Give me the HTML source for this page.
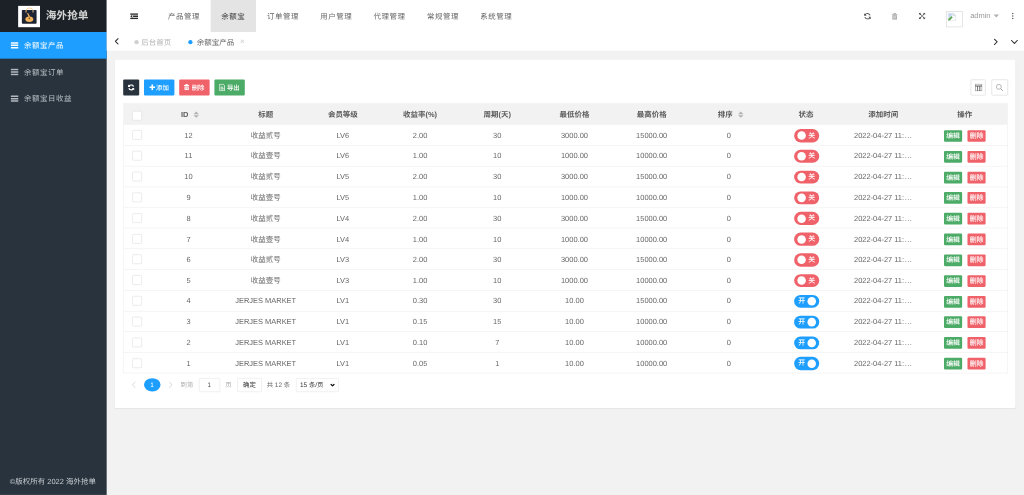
<!DOCTYPE html>
<html lang="zh-CN">
<head>
<meta charset="utf-8">
<title>海外抢单</title>
<style>
*{box-sizing:border-box;margin:0;padding:0}
html,body{width:1024px;height:495px;overflow:hidden;background:#f2f2f2}
body{text-rendering:geometricPrecision;font-family:"Liberation Sans","Noto Sans CJK SC",sans-serif;font-size:14px;color:#666;line-height:24px}
#app{position:absolute;left:0;top:0;width:1920px;height:928px;filter:contrast(1);transform:scale(0.533333);transform-origin:0 0;background:#f2f2f2;overflow:hidden}
ul{list-style:none}
.abs{position:absolute}
/* sidebar */
.side{position:absolute;left:0;top:0;width:200px;height:928px;background:#28333e}
.logo{height:59.500px;background:#1c2127;position:relative}
.logo .img{position:absolute;left:33.500px;top:10.500px;width:41px;height:40px;background:#fff}
.logo .txt{position:absolute;left:86px;top:0;line-height:60px;font-size:20px;font-weight:bold;color:#d2d2d2;white-space:nowrap}
.menu li{height:50px;line-height:50px;color:#bbc0c5;font-size:14px;position:relative;padding-left:45px;letter-spacing:1px;white-space:nowrap}
.menu li.on{background:#1e9fff;color:#fff;height:50.500px}
.menu li svg{position:absolute;left:20px;top:18px}
.copy{position:absolute;left:0;bottom:0;width:200px;height:50px;line-height:50px;padding-left:18.500px;font-size:14px;color:#c9cdd1;white-space:nowrap}
/* header */
.head{position:absolute;left:200px;top:0;right:0;height:60px;background:#fff}
.nav .it{position:absolute;top:0;height:59.500px;line-height:60px;font-size:14px;color:#666;padding-left:20px;letter-spacing:1px;white-space:nowrap}
.nav .it.on{background:#e4e4e4;color:#333}
/* tabs */
.tabs{position:absolute;left:200px;top:60px;right:0;height:35px;background:#fff}
.tabs .t{position:absolute;top:1.300px;line-height:36px;font-size:14px;color:#b4b4b4;white-space:nowrap}
.tabs .t.on{color:#666}
.dot{position:absolute;width:8px;height:8px;border-radius:50%;background:#d0d0d0}
/* card */
.card{position:absolute;left:215px;top:112px;width:1689px;height:653px;background:#fff;border-radius:3px;box-shadow:0 1px 2px rgba(0,0,0,.05)}
.btn{position:absolute;top:37px;height:30px;line-height:30px;border-radius:2px;color:#fff;font-size:12px;font-weight:500;text-align:center;white-space:nowrap}
.tbtn{position:absolute;top:36.500px;width:30px;height:30.500px;border:1px solid #d4d4d4;border-radius:2px;background:#fff}
.tb{position:absolute;left:16px;top:81px;width:1659px;border:1px solid #ececec;border-bottom:0}
.tr{display:flex;height:38.850px;border-bottom:1px solid #ececec;font-size:14px;color:#666;white-space:nowrap}
.tr.h{height:40px;background:#f2f2f2;font-weight:bold;color:#5a5a5a;border-bottom:0}
.tr>div{flex:0 0 144.760px;display:flex;align-items:center;justify-content:center;overflow:hidden;position:relative;top:0.600px}
.tr.h>div{top:0.500px}
.tr>div.c0{flex:0 0 49px}
.tr>div.op{flex:1 1 auto}
.tr>div.dt{justify-content:flex-start;padding-left:17.500px}
.el{letter-spacing:1px;margin-left:1px}
.cb{display:block;width:18px;height:18px;border:1px solid #dcdcdc;border-radius:2px;background:#fff;position:relative;top:-0.200px}
.tr.h .cb{top:2px}
.sort{display:block;position:relative;width:10px;height:14px;margin-left:10px;margin-right:-6px}
.sort:before,.sort:after{content:"";position:absolute;left:0;border:5px solid transparent}
.sort:before{top:-4px;border-bottom-color:#b2b2b2}
.sort:after{top:8px;border-top-color:#b2b2b2}
.sw{display:block;position:relative;top:0.800px;left:1px;width:47.500px;height:24.500px;border-radius:12.500px;color:#fff;font-size:12px;line-height:24px}
.sw.off{background:#f0626a}
.sw.onn{background:#1e9fff}
.sw i{position:absolute;top:4.250px;width:16px;height:16px;border-radius:50%;background:#fff}
.sw.off i{left:6px}.sw.onn i{right:6px}
.sw b{position:absolute;top:0;font-weight:500;font-size:13px}
.sw.off b{left:27px}
.sw.onn b{left:8px}
.ab{display:block;position:relative;top:1.300px;width:34px;height:22px;line-height:22px;font-size:13px;letter-spacing:-0.500px;font-weight:500;color:#fff;border-radius:2px;text-align:center}
.ab.g{background:#4cab66}
.ab.r{background:#f0626a;margin-left:10px}
.pg{position:absolute;white-space:nowrap;font-size:12px;line-height:26px;top:596.500px;height:26px}
.pg.bx{border:1px solid #e2e2e2;border-radius:2px;line-height:24px;text-align:center;background:#fff}
</style>
</head>
<body>
<div id="app">

<div class="side">
  <div class="logo">
    <div class="img">
      <svg width="41" height="40" viewBox="0 0 41 40">
        <rect x="7" y="7.600" width="27.600" height="26" rx="1.500" fill="#1e2433"/>
        <path d="M14.800 12.500 V9.500 C14.800 2.500 28 2.500 28 9.500 V12.500" fill="none" stroke="#f3c98f" stroke-width="1.800"/>
        <path d="M16.500 13.500 L19 14 L22.500 20 L20 21.500 Z" fill="#e9b15e"/>
        <ellipse cx="21" cy="25" rx="7.400" ry="5.200" fill="#f2b45a"/>
        <circle cx="21" cy="23.500" r="1.500" fill="#7a4a1c"/>
      </svg>
    </div>
    <div class="txt">海外抢单</div>
  </div>
  <ul class="menu">
    <li class="on"><svg width="14.500" height="14" viewBox="0 0 16 14" preserveAspectRatio="none"><path d="M0 1h16v2.800H0zM0 5.600h16v2.800H0zM0 10.200h16v2.800H0z" fill="#fff"/></svg>余额宝产品</li>
    <li><svg width="14.500" height="14" viewBox="0 0 16 14" preserveAspectRatio="none"><path d="M0 1h16v2.800H0zM0 5.600h16v2.800H0zM0 10.200h16v2.800H0z" fill="#b4b9bf"/></svg>余额宝订单</li>
    <li><svg width="14.500" height="14" viewBox="0 0 16 14" preserveAspectRatio="none"><path d="M0 1h16v2.800H0zM0 5.600h16v2.800H0zM0 10.200h16v2.800H0z" fill="#b4b9bf"/></svg>余额宝日收益</li>
  </ul>
  <div class="copy">©版权所有 2022 海外抢单</div>
</div>

<div class="head">
  <div class="nav">
    <svg class="abs" style="left:43.500px;top:25px" width="15" height="11" viewBox="0 0 15 11"><path d="M0 0h15v2.500H0zM5.500 4.250H15v2.500H5.500zM0 8.500h15v2.500H0zM4 2.800v5.400L0.200 5.500z" fill="#2a2a2a"/></svg>
    <div class="it" style="left:95px;width:100px">产品管理</div>
    <div class="it on" style="left:195px;width:84.500px">余额宝</div>
    <div class="it" style="left:280.500px;width:100px">订单管理</div>
    <div class="it" style="left:380.500px;width:100px">用户管理</div>
    <div class="it" style="left:480.500px;width:100px">代理管理</div>
    <div class="it" style="left:580.500px;width:100px">常规管理</div>
    <div class="it" style="left:680.500px;width:100px">系统管理</div>
  </div>
  <svg class="abs" style="left:1419.500px;top:23.500px" width="13" height="13" viewBox="0 0 14 14"><path d="M12.200 5.200A5.500 5.500 0 0 0 2 4.600M1.800 8.800A5.500 5.500 0 0 0 12 9.400" fill="none" stroke="#5a5a5a" stroke-width="2.300"/><path d="M0.200 0.800v5.200h5.200zM13.800 13.200v-5.200H8.600z" fill="#5a5a5a"/></svg>
  <svg class="abs" style="left:1472px;top:23.500px" width="11" height="13" viewBox="0 0 11 13"><path d="M0 2.200h11v1.600H0zM3.500 0.500h4v1.700h-4zM1.200 4.400h8.600V13H1.200z" fill="#a8a8a8"/><path d="M3.600 6v5M5.500 6v5M7.400 6v5" stroke="#fff" stroke-width="0.800"/></svg>
  <svg class="abs" style="left:1523px;top:24px" width="12" height="12" viewBox="0 0 14 14"><path d="M0 0h5L3.400 1.600 5.600 3.800 3.800 5.600 1.600 3.400 0 5zM14 0v5l-1.600-1.600-2.200 2.200-1.800-1.800 2.200-2.200L9 0zM0 14V9l1.600 1.600 2.200-2.200 1.800 1.800-2.200 2.200L5 14zM14 14H9l1.600-1.600-2.200-2.200 1.800-1.800 2.200 2.200L14 9z" fill="#555"/><path d="M4.500 4.500l5 5M9.500 4.500l-5 5" stroke="#555" stroke-width="1.500"/></svg>
  <div class="abs" style="left:1574px;top:20.500px;width:31px;height:30px;border:1px solid #cfcfcf;background:#fff">
    <svg width="16" height="16" viewBox="0 0 16 16" style="position:absolute;left:2px;top:2px"><path d="M0.500 0.500h10l5 5v10h-15z" fill="#fff" stroke="#c0c4ca" stroke-width="1"/><path d="M1 14.500V11l5.500-5 3 2.500L4 14.500z" fill="#62a85a"/><path d="M1.500 1.500h7.500v3.500L6.500 5.500 1.500 10z" fill="#c4d8f5"/><path d="M10.500 0.500v5h5" fill="#eef1f5" stroke="#c0c4ca" stroke-width="1"/></svg>
  </div>
  <div class="abs" style="left:1619px;top:0;line-height:58px;font-size:14px;color:#999;white-space:nowrap">admin</div>
  <div class="abs" style="left:1663px;top:27px;border:5px solid transparent;border-top:6px solid #b0b0b0;border-bottom:0"></div>
  <svg class="abs" style="left:1696.500px;top:24px" width="4" height="12" viewBox="0 0 4 12"><circle cx="2" cy="1.500" r="1.400" fill="#555"/><circle cx="2" cy="6" r="1.400" fill="#555"/><circle cx="2" cy="10.500" r="1.400" fill="#555"/></svg>
</div>

<div class="tabs">
  <svg class="abs" style="left:15px;top:11px" width="8" height="13" viewBox="0 0 8 13"><path d="M7 0.800L1.300 6.500 7 12.200" fill="none" stroke="#333" stroke-width="2"/></svg>
  <span class="dot" style="left:51.500px;top:14.500px"></span>
  <div class="t" style="left:65px">后台首页</div>
  <span class="dot" style="left:152.500px;top:14.500px;background:#1e9fff"></span>
  <div class="t on" style="left:169px">余额宝产品</div>
  <div class="t" style="left:250px;font-size:15px;color:#cacaca">×</div>
  <svg class="abs" style="left:1663px;top:11.500px" width="8" height="13" viewBox="0 0 8 13"><path d="M1 0.800L6.700 6.500 1 12.200" fill="none" stroke="#333" stroke-width="1.900"/></svg>
  <svg class="abs" style="left:1695px;top:14px" width="14" height="9" viewBox="0 0 14 9"><path d="M0.800 1L7 7.500 13.200 1" fill="none" stroke="#333" stroke-width="1.900"/></svg>
</div>

<div class="card">
  <div class="btn" style="left:16px;width:30px;background:#28333e"><svg width="12" height="12" viewBox="0 0 14 14" style="margin-top:9px"><path d="M12 5.200A5.300 5.300 0 0 0 2.200 4.400M2 8.800A5.300 5.300 0 0 0 11.800 9.600" fill="none" stroke="#fff" stroke-width="2.800"/><path d="M0 0.300v5.600h5.600zM14 13.700v-5.600H8.400z" fill="#fff"/></svg></div>
  <div class="btn" style="left:55px;width:56.500px;background:#1e9fff"><svg width="11" height="11" viewBox="0 0 11 11" style="vertical-align:-1px;margin-right:2px"><path d="M4 0h3v4h4v3H7v4H4V7H0V4h4z" fill="#fff"/></svg>添加</div>
  <div class="btn" style="left:121px;width:57px;background:#f0626a"><svg width="10" height="12" viewBox="0 0 10 12" style="vertical-align:-1px;margin-right:4px"><path d="M0 2.500h10v1.600H0zM3 0.500h4v2h-4zM1 5h8v7H1z" fill="#fff"/><path d="M3.500 6.500v4M6.500 6.500v4" stroke="#f0626a" stroke-width="1"/></svg>删除</div>
  <div class="btn" style="left:187px;width:57px;background:#4cab66"><svg width="11" height="14" viewBox="0 0 11 14" style="vertical-align:-3px;margin-right:3px"><path d="M0.800 0.800h6.400l3 3v9.400H0.800z" fill="none" stroke="#fff" stroke-width="1.500"/><path d="M7.500 6.200H3.500v4h4v-2H5.500" fill="none" stroke="#fff" stroke-width="1.300"/></svg>导出</div>

  <div class="tbtn" style="left:1604.500px;width:28.500px"><svg width="14" height="14" viewBox="0 0 14 14" style="position:absolute;left:7px;top:7px"><path d="M0.700 0.700h12.600v3.600H0.700zM0.700 4.300h4.200v9H0.700zM4.900 4.300h4.200v9H4.900zM9.100 4.300h4.200v9H9.100z" fill="none" stroke="#555" stroke-width="1"/></svg></div>
  <div class="tbtn" style="left:1643.700px;width:31px"><svg width="14" height="14" viewBox="0 0 14 14" style="position:absolute;left:7px;top:7px"><circle cx="5.800" cy="5.800" r="4.600" fill="none" stroke="#999" stroke-width="1.300"/><path d="M9.200 9.200l4 4" stroke="#999" stroke-width="1.800"/></svg></div>

  <div class="tb">
    <div class="tr h"><div class="c0"><span class="cb"></span></div><div>ID<span class="sort"></span></div><div>标题</div><div>会员等级</div><div>收益率(%)</div><div>周期(天)</div><div>最低价格</div><div>最高价格</div><div>排序<span class="sort"></span></div><div>状态</div><div>添加时间</div><div class="op">操作</div></div>
    <div class="tr"><div class="c0"><span class="cb"></span></div><div>12</div><div>收益贰号</div><div>LV6</div><div>2.00</div><div>30</div><div>3000.00</div><div>15000.00</div><div>0</div><div><span class="sw off"><i></i><b>关</b></span></div><div class="dt">2022-04-27 11:<span class="el">...</span></div><div class="op"><span class="ab g">编辑</span><span class="ab r">删除</span></div></div>
    <div class="tr"><div class="c0"><span class="cb"></span></div><div>11</div><div>收益壹号</div><div>LV6</div><div>1.00</div><div>10</div><div>1000.00</div><div>10000.00</div><div>0</div><div><span class="sw off"><i></i><b>关</b></span></div><div class="dt">2022-04-27 11:<span class="el">...</span></div><div class="op"><span class="ab g">编辑</span><span class="ab r">删除</span></div></div>
    <div class="tr"><div class="c0"><span class="cb"></span></div><div>10</div><div>收益贰号</div><div>LV5</div><div>2.00</div><div>30</div><div>3000.00</div><div>15000.00</div><div>0</div><div><span class="sw off"><i></i><b>关</b></span></div><div class="dt">2022-04-27 11:<span class="el">...</span></div><div class="op"><span class="ab g">编辑</span><span class="ab r">删除</span></div></div>
    <div class="tr"><div class="c0"><span class="cb"></span></div><div>9</div><div>收益壹号</div><div>LV5</div><div>1.00</div><div>10</div><div>1000.00</div><div>10000.00</div><div>0</div><div><span class="sw off"><i></i><b>关</b></span></div><div class="dt">2022-04-27 11:<span class="el">...</span></div><div class="op"><span class="ab g">编辑</span><span class="ab r">删除</span></div></div>
    <div class="tr"><div class="c0"><span class="cb"></span></div><div>8</div><div>收益贰号</div><div>LV4</div><div>2.00</div><div>30</div><div>3000.00</div><div>15000.00</div><div>0</div><div><span class="sw off"><i></i><b>关</b></span></div><div class="dt">2022-04-27 11:<span class="el">...</span></div><div class="op"><span class="ab g">编辑</span><span class="ab r">删除</span></div></div>
    <div class="tr"><div class="c0"><span class="cb"></span></div><div>7</div><div>收益壹号</div><div>LV4</div><div>1.00</div><div>10</div><div>1000.00</div><div>10000.00</div><div>0</div><div><span class="sw off"><i></i><b>关</b></span></div><div class="dt">2022-04-27 11:<span class="el">...</span></div><div class="op"><span class="ab g">编辑</span><span class="ab r">删除</span></div></div>
    <div class="tr"><div class="c0"><span class="cb"></span></div><div>6</div><div>收益贰号</div><div>LV3</div><div>2.00</div><div>30</div><div>3000.00</div><div>15000.00</div><div>0</div><div><span class="sw off"><i></i><b>关</b></span></div><div class="dt">2022-04-27 11:<span class="el">...</span></div><div class="op"><span class="ab g">编辑</span><span class="ab r">删除</span></div></div>
    <div class="tr"><div class="c0"><span class="cb"></span></div><div>5</div><div>收益壹号</div><div>LV3</div><div>1.00</div><div>10</div><div>1000.00</div><div>10000.00</div><div>0</div><div><span class="sw off"><i></i><b>关</b></span></div><div class="dt">2022-04-27 11:<span class="el">...</span></div><div class="op"><span class="ab g">编辑</span><span class="ab r">删除</span></div></div>
    <div class="tr"><div class="c0"><span class="cb"></span></div><div>4</div><div>JERJES MARKET</div><div>LV1</div><div>0.30</div><div>30</div><div>10.00</div><div>15000.00</div><div>0</div><div><span class="sw onn"><b>开</b><i></i></span></div><div class="dt">2022-04-27 11:<span class="el">...</span></div><div class="op"><span class="ab g">编辑</span><span class="ab r">删除</span></div></div>
    <div class="tr"><div class="c0"><span class="cb"></span></div><div>3</div><div>JERJES MARKET</div><div>LV1</div><div>0.15</div><div>15</div><div>10.00</div><div>10000.00</div><div>0</div><div><span class="sw onn"><b>开</b><i></i></span></div><div class="dt">2022-04-27 11:<span class="el">...</span></div><div class="op"><span class="ab g">编辑</span><span class="ab r">删除</span></div></div>
    <div class="tr"><div class="c0"><span class="cb"></span></div><div>2</div><div>JERJES MARKET</div><div>LV1</div><div>0.10</div><div>7</div><div>10.00</div><div>10000.00</div><div>0</div><div><span class="sw onn"><b>开</b><i></i></span></div><div class="dt">2022-04-27 11:<span class="el">...</span></div><div class="op"><span class="ab g">编辑</span><span class="ab r">删除</span></div></div>
    <div class="tr"><div class="c0"><span class="cb"></span></div><div>1</div><div>JERJES MARKET</div><div>LV1</div><div>0.05</div><div>1</div><div>10.00</div><div>10000.00</div><div>0</div><div><span class="sw onn"><b>开</b><i></i></span></div><div class="dt">2022-04-27 11:<span class="el">...</span></div><div class="op"><span class="ab g">编辑</span><span class="ab r">删除</span></div></div>
  </div>

  <svg class="abs" style="left:32px;top:603px" width="8" height="13" viewBox="0 0 8 13"><path d="M7 1L1.200 6.500 7 12" fill="none" stroke="#c8c8c8" stroke-width="1.300"/></svg>
  <div class="pg" style="left:54.500px;top:596.500px;width:31px;height:25.500px;border-radius:50%;background:#1e9fff;color:#fff;text-align:center;line-height:25.500px">1</div>
  <svg class="abs" style="left:101px;top:603px" width="8" height="13" viewBox="0 0 8 13"><path d="M1 1l5.800 5.500L1 12" fill="none" stroke="#c8c8c8" stroke-width="1.300"/></svg>
  <div class="pg" style="left:123.500px;color:#aaa">到第</div>
  <div class="pg bx" style="left:157.500px;width:40px;color:#555">1</div>
  <div class="pg" style="left:207.500px;color:#aaa">页</div>
  <div class="pg bx" style="left:230px;width:45.500px;color:#333">确定</div>
  <div class="pg" style="left:285px;color:#666">共 12 条</div>
  <div class="pg bx" style="left:340px;width:80px;color:#333;text-align:left;padding-left:6.500px">15 条/页<svg width="9" height="6" viewBox="0 0 9 6" style="position:absolute;right:6px;top:9px"><path d="M1 1l3.500 3.500L8 1" fill="none" stroke="#111" stroke-width="2.400"/></svg></div>
</div>

</div>
</body>
</html>
